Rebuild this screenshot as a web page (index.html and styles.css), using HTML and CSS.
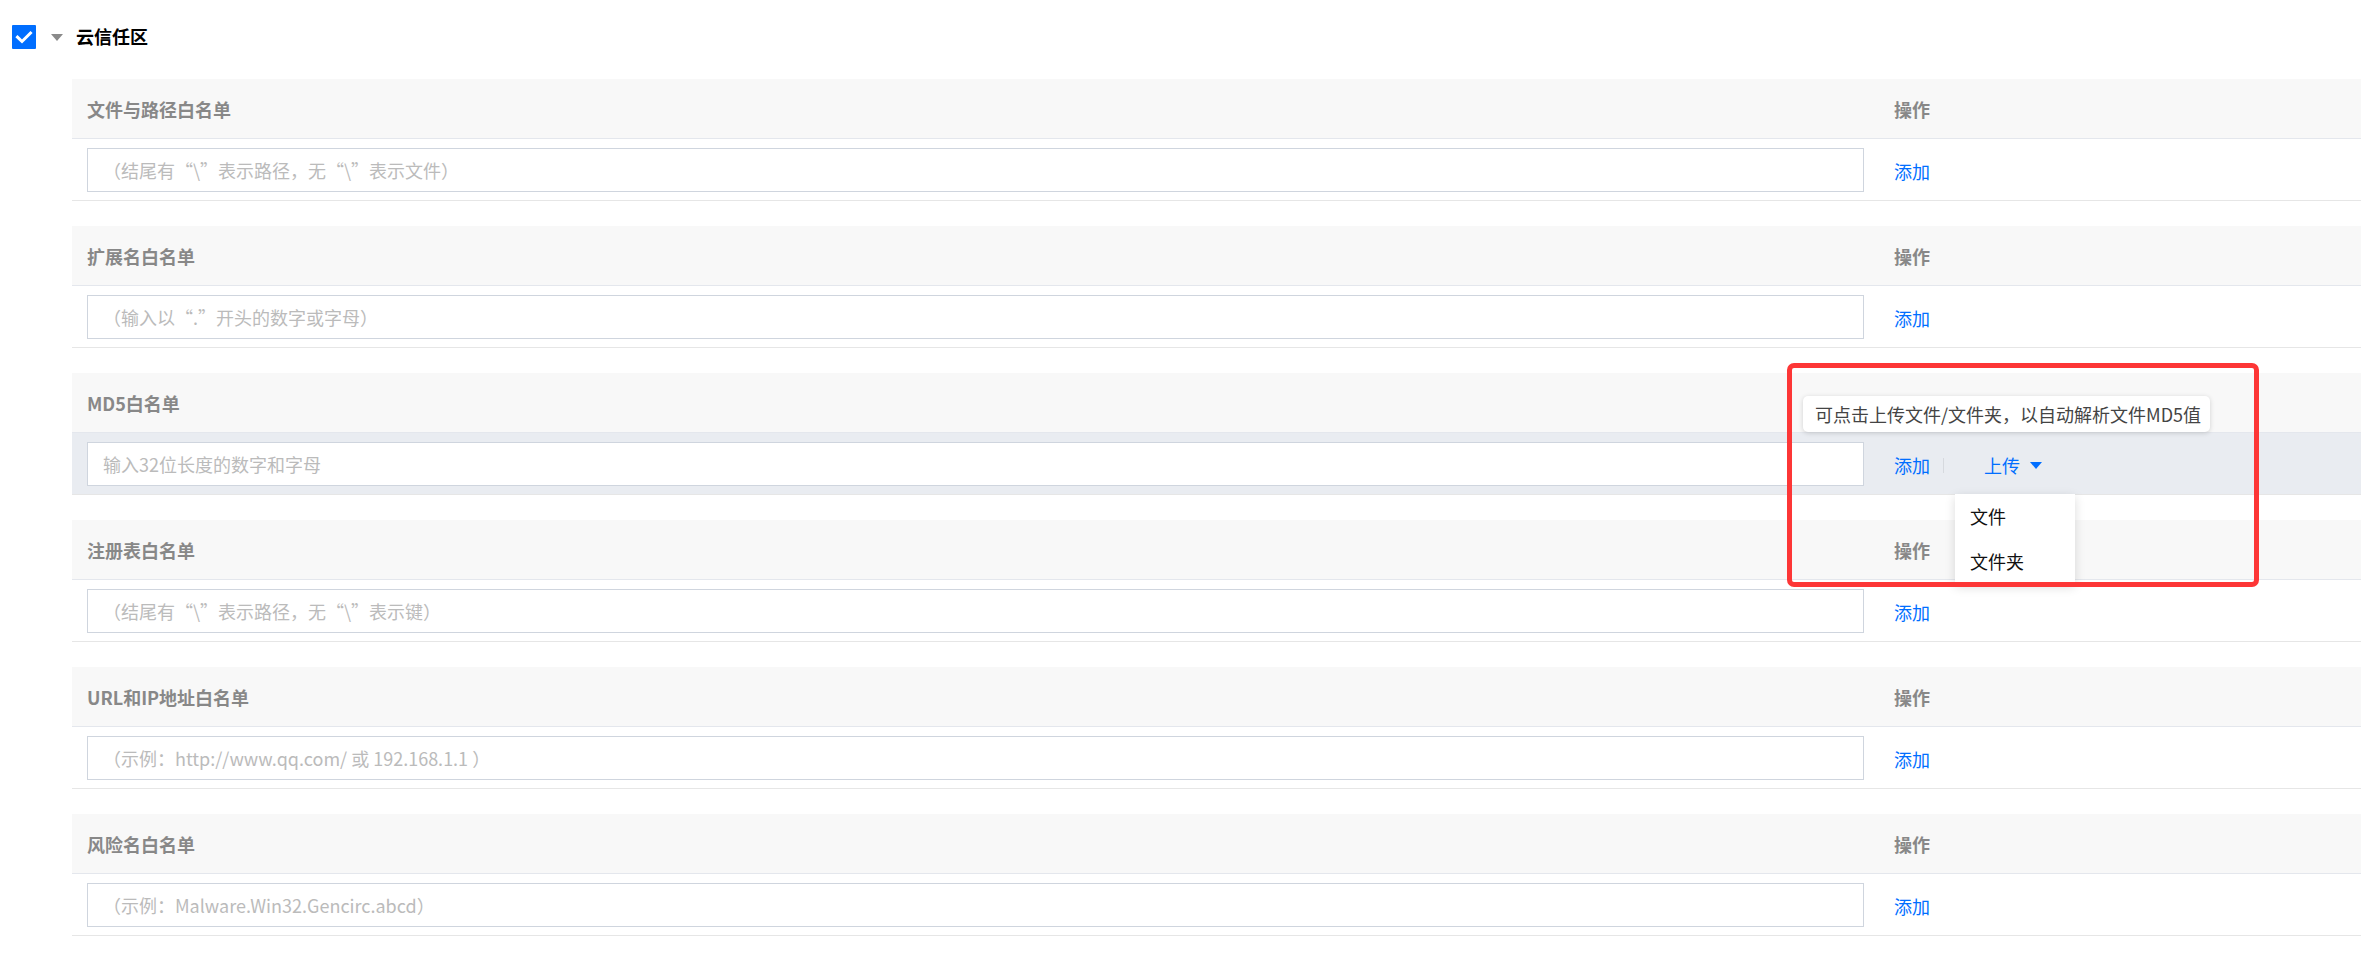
FILE: index.html
```html
<!DOCTYPE html>
<html lang="zh-CN">
<head>
<meta charset="utf-8">
<title>云信任区</title>
<link rel="stylesheet" href="styles.css">
</head>
<body>
<div class="page">
  <div class="zone-head">
    <span class="checkbox">
      <svg width="24" height="24" viewBox="0 0 24 24"><path d="M5.5 12.2 L10 16.5 L18.5 8" fill="none" stroke="#fff" stroke-width="3" stroke-linecap="square"/></svg>
    </span>
    <span class="caret"></span>
    <span class="zone-title">云信任区</span>
  </div>

  <div class="lists">
    <section class="wl">
      <div class="wl-row wl-head"><div class="c-main">文件与路径白名单</div><div class="c-op">操作</div></div>
      <div class="wl-row wl-body"><div class="c-main"><input class="wl-input" placeholder="（结尾有“\”表示路径，无“\”表示文件）"></div><div class="c-op"><a class="link">添加</a></div></div>
    </section>

    <section class="wl">
      <div class="wl-row wl-head"><div class="c-main">扩展名白名单</div><div class="c-op">操作</div></div>
      <div class="wl-row wl-body"><div class="c-main"><input class="wl-input" placeholder="（输入以“.”开头的数字或字母）"></div><div class="c-op"><a class="link">添加</a></div></div>
    </section>

    <section class="wl wl-md5">
      <div class="wl-row wl-head"><div class="c-main">MD5白名单</div><div class="c-op is-covered">操作</div></div>
      <div class="wl-row wl-body is-hover"><div class="c-main"><input class="wl-input" placeholder="输入32位长度的数字和字母"></div><div class="c-op"><a class="link">添加</a><span class="sep"></span><a class="link upload">上传<span class="tri"></span></a></div></div>
      <div class="tooltip">可点击上传文件/文件夹，以自动解析文件MD5值</div>
      <ul class="menu">
        <li>文件</li>
        <li>文件夹</li>
      </ul>
      <div class="annot"></div>
    </section>

    <section class="wl">
      <div class="wl-row wl-head"><div class="c-main">注册表白名单</div><div class="c-op">操作</div></div>
      <div class="wl-row wl-body"><div class="c-main"><input class="wl-input" placeholder="（结尾有“\”表示路径，无“\”表示键）"></div><div class="c-op"><a class="link">添加</a></div></div>
    </section>

    <section class="wl">
      <div class="wl-row wl-head"><div class="c-main">URL和IP地址白名单</div><div class="c-op">操作</div></div>
      <div class="wl-row wl-body"><div class="c-main"><input class="wl-input" placeholder="（示例：http://www.qq.com/ 或 192.168.1.1 ）"></div><div class="c-op"><a class="link">添加</a></div></div>
    </section>

    <section class="wl">
      <div class="wl-row wl-head"><div class="c-main">风险名白名单</div><div class="c-op">操作</div></div>
      <div class="wl-row wl-body"><div class="c-main"><input class="wl-input" placeholder="（示例：Malware.Win32.Gencirc.abcd）"></div><div class="c-op"><a class="link">添加</a></div></div>
    </section>
  </div>
</div>
</body>
</html>
```

FILE: styles.css
```css
* { box-sizing: border-box; }
html, body { margin: 0; padding: 0; background: #fff; }
body {
  font-family: "Noto Sans CJK SC", "Noto Sans", sans-serif;
  font-size: 18px;
  color: #333;
  width: 2361px;
  overflow: hidden;
}
.page { padding-top: 25px; }

.zone-head {
  display: flex;
  align-items: center;
  padding-left: 12px;
  height: 24px;
}
.checkbox {
  width: 24px;
  height: 24px;
  background: #006eff;
  border-radius: 1px;
  display: flex;
}
.caret {
  width: 0;
  height: 0;
  margin-left: 15px;
  border-left: 6px solid transparent;
  border-right: 6px solid transparent;
  border-top: 7px solid #8a8a8a;
}
.zone-title {
  margin-left: 13px;
  font-weight: 700;
  color: #000;
  font-size: 18px;
  line-height: 24px;
  margin-top: -2px;
}

.lists {
  margin-top: 30px;
  margin-left: 72px;
}
.wl { margin-bottom: 25px; position: relative; }

.wl-row { display: flex; }
.c-main { width: 1807px; padding: 0 15px; display: flex; align-items: center; }
.c-op { flex: 1; padding: 0 15px; display: flex; align-items: center; }
.c-op.is-covered { visibility: hidden; }

.wl-head {
  height: 60px;
  background: #f8f8f8;
  border-bottom: 1px solid #e4e7ed;
  color: #888;
  font-weight: 700;
  font-size: 18px;
}
.wl-head .c-main, .wl-head .c-op { padding-top: 1px; }
.wl-body {
  height: 62px;
  border-bottom: 1px solid #e6e6e6;
  padding-top: 9px;
  padding-bottom: 8px;
  background: #fff;
}
.wl-body .c-main { align-items: flex-start; }
.wl-body .c-op { padding-top: 2px; }
.wl-body.is-hover { background: #e9ecf1; }

.wl-input {
  width: 100%;
  height: 44px;
  border: 1px solid #cfd5de;
  background: #fff;
  padding: 0 15px;
  font-family: "Noto Sans CJK SC", "Noto Sans", sans-serif;
  font-size: 18px;
  color: #333;
  outline: none;
  border-radius: 0;
}
.wl-input::placeholder { color: #bbbbbb; }

.link {
  color: #006eff;
  font-size: 18px;
  cursor: pointer;
  display: inline-flex;
  align-items: center;
}
.sep {
  display: inline-block;
  width: 1px;
  height: 15px;
  background: #d6d9de;
  margin-left: 13px;
  margin-right: 40px;
}
.upload .tri {
  width: 0;
  height: 0;
  margin-left: 10px;
  border-left: 6px solid transparent;
  border-right: 6px solid transparent;
  border-top: 7px solid #006eff;
}

.tooltip {
  position: absolute;
  left: 1731px;
  top: 23px;
  width: 407px;
  height: 36px;
  background: #fff;
  border-radius: 5px;
  box-shadow: 0 1px 5px rgba(0, 0, 0, 0.16);
  padding-left: 12px;
  display: flex;
  align-items: center;
  color: #444;
  font-size: 18px;
  white-space: nowrap;
  z-index: 2;
}

.menu {
  position: absolute;
  left: 1883px;
  top: 121px;
  width: 120px;
  margin: 0;
  padding: 0;
  list-style: none;
  background: #fff;
  box-shadow: 0 3px 10px rgba(0, 0, 0, 0.14);
  z-index: 3;
}
.menu li {
  height: 45px;
  line-height: 45px;
  padding-left: 15px;
  color: #111;
  font-size: 18px;
}

.annot {
  position: absolute;
  left: 1715px;
  top: -10px;
  width: 472px;
  height: 224px;
  border: 5px solid #fd3636;
  border-radius: 7px;
  z-index: 5;
  pointer-events: none;
}
```
